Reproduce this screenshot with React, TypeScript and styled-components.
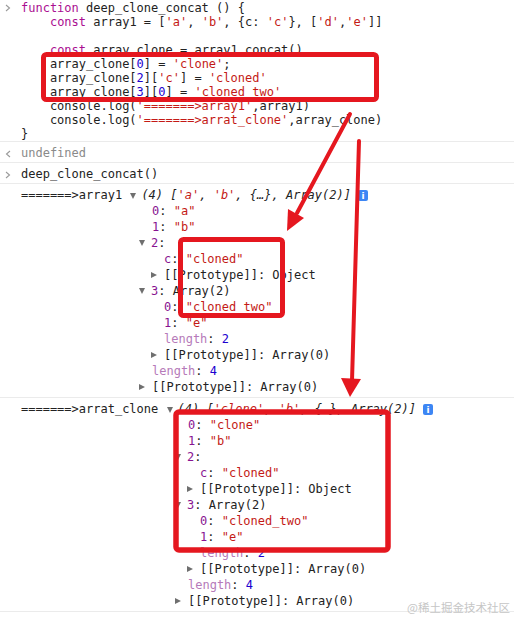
import React from 'react';
import styled, { createGlobalStyle } from 'styled-components';

const Global = createGlobalStyle`
  html, body { margin: 0; padding: 0; background: #fff; }
  body { width: 514px; height: 617px; overflow: hidden; }
`;

const Page = styled.div`
  position: relative;
  width: 514px;
  height: 617px;
  overflow: hidden;
  background: #fff;
  font-family: "DejaVu Sans Mono", "Liberation Mono", monospace;
  font-size: 12px;
  color: #222;
`;

const Message = styled.div<{ $pt?: number; $pb?: number }>`
  display: flex;
  padding: ${(p) => p.$pt ?? 4}px 0 ${(p) => p.$pb ?? 1}px;
  border-bottom: 1px solid #ebebeb;
`;

const Gutter = styled.div<{ $lh: number }>`
  width: 21px;
  flex: none;
  height: ${(p) => p.$lh}px;
  display: flex;
  align-items: center;
  padding-left: 5px;
  box-sizing: border-box;
`;

const Body = styled.div`
  flex: 1;
  min-width: 0;
`;

const Code = styled.div`
  line-height: 14px;
  white-space: pre;
`;

const Line = styled.div`
  height: 14px;
`;

const Kw = styled.span`
  color: #aa0d91;
`;
const Str = styled.span`
  color: #c41a16;
`;
const Num = styled.span`
  color: #1c00cf;
`;

const Plain = styled.div<{ $muted?: boolean }>`
  line-height: 15px;
  height: 15px;
  white-space: pre;
  color: ${(p) => (p.$muted ? '#8a8a8a' : '#222')};
`;

const Header = styled.div`
  display: flex;
  align-items: center;
  height: 15px;
  line-height: 15px;
  white-space: pre;
`;

const Preview = styled.span`
  font-style: italic;
`;

const Info = styled.span`
  display: inline-flex;
  align-items: center;
  justify-content: center;
  width: 10px;
  height: 11px;
  margin-left: 7px;
  border-radius: 2px;
  background: #3d86f4;
  color: #fff;
  font: bold 9px "DejaVu Sans", sans-serif;
  font-style: normal;
`;

const Tree = styled.div<{ $indent: number }>`
  padding-left: ${(p) => p.$indent}px;
`;

const TreeRow = styled.div<{ $depth: number }>`
  display: flex;
  align-items: center;
  height: 16px;
  line-height: 16px;
  white-space: pre;
  padding-left: ${(p) => p.$depth * 12}px;
`;

const Toggle = styled.span<{ $open?: boolean; $inline?: boolean }>`
  display: inline-block;
  width: 0;
  height: 0;
  flex: none;
  margin-left: ${(p) => (p.$inline ? '1px' : '-13.5px')};
  margin-right: ${(p) => (p.$inline ? '5px' : p.$open ? '6.5px' : '7.5px')};
  ${(p) =>
    p.$open
      ? `border-left: 3.5px solid transparent; border-right: 3.5px solid transparent; border-top: 6px solid #6f6f6f;`
      : `border-top: 3.5px solid transparent; border-bottom: 3.5px solid transparent; border-left: 6px solid #6f6f6f;`}
`;

const Key = styled.span<{ $faded?: boolean }>`
  color: ${(p) => (p.$faded ? '#b67ab9' : '#881391')};
`;

const Watermark = styled.div`
  position: absolute;
  right: 4px;
  top: 599px;
  font-family: "Noto Sans CJK SC", "Noto Sans", sans-serif;
  font-size: 11.5px;
  line-height: 16px;
  color: #c6c6c6;
  white-space: nowrap;
`;

const Overlay = styled.svg`
  position: absolute;
  left: 0;
  top: 0;
  pointer-events: none;
`;

const Chevron = ({ dir }: { dir: 'in' | 'out' }) => (
  <svg width="6" height="8" viewBox="0 0 6 8">
    <polyline
      points={dir === 'in' ? '1,1 4.5,4 1,7' : '5,1 1.5,4 5,7'}
      fill="none"
      stroke="#9a9a9a"
      strokeWidth="1.1"
    />
  </svg>
);

type Tok = [string, string];
const codeLines: Tok[][] = [
  [['k', 'function'], ['p', ' deep_clone_concat () {']],
  [
    ['p', '    '],
    ['k', 'const'],
    ['p', ' array1 = ['],
    ['s', "'a'"],
    ['p', ', '],
    ['s', "'b'"],
    ['p', ', {c: '],
    ['s', "'c'"],
    ['p', '}, ['],
    ['s', "'d'"],
    ['p', ','],
    ['s', "'e'"],
    ['p', ']]'],
  ],
  [],
  [['p', '    '], ['k', 'const'], ['p', ' array_clone = array1.concat()']],
  [['p', '    array_clone['], ['n', '0'], ['p', '] = '], ['s', "'clone'"], ['p', ';']],
  [['p', '    array_clone['], ['n', '2'], ['p', ']['], ['s', "'c'"], ['p', '] = '], ['s', "'cloned'"]],
  [['p', '    array_clone['], ['n', '3'], ['p', ']['], ['n', '0'], ['p', '] = '], ['s', "'cloned_two'"]],
  [['p', '    console.log('], ['s', "'=======>array1'"], ['p', ',array1)']],
  [['p', '    console.log('], ['s', "'=======>arrat_clone'"], ['p', ',array_clone)']],
  [['p', '}']],
];

const renderTok = ([t, s]: Tok, i: number) => {
  if (t === 'k') return <Kw key={i}>{s}</Kw>;
  if (t === 's') return <Str key={i}>{s}</Str>;
  if (t === 'n') return <Num key={i}>{s}</Num>;
  return <React.Fragment key={i}>{s}</React.Fragment>;
};

type Node = {
  depth: number;
  toggle?: 'open' | 'closed';
  content: React.ReactNode;
};

const buildTree = (first: string): Node[] => [
  { depth: 0, content: <><Key>0</Key>: <Str>"{first}"</Str></> },
  { depth: 0, content: <><Key>1</Key>: <Str>"b"</Str></> },
  { depth: 0, toggle: 'open', content: <><Key>2</Key>:</> },
  { depth: 1, content: <><Key>c</Key>: <Str>"cloned"</Str></> },
  { depth: 1, toggle: 'closed', content: <>[[Prototype]]: Object</> },
  { depth: 0, toggle: 'open', content: <><Key>3</Key>: Array(2)</> },
  { depth: 1, content: <><Key>0</Key>: <Str>"cloned_two"</Str></> },
  { depth: 1, content: <><Key>1</Key>: <Str>"e"</Str></> },
  { depth: 1, content: <><Key $faded>length</Key>: <Num>2</Num></> },
  { depth: 1, toggle: 'closed', content: <>[[Prototype]]: Array(0)</> },
  { depth: 0, content: <><Key $faded>length</Key>: <Num>4</Num></> },
  { depth: 0, toggle: 'closed', content: <>[[Prototype]]: Array(0)</> },
];

const LogEntry = ({ label, first, indent }: { label: string; first: string; indent: number }) => (
  <Message $pt={4} $pb={2}>
    <Gutter $lh={15} />
    <Body>
      <Header>
        {label + ' '}
        <Toggle $open $inline />
        <Preview>
          (4) [<Str>'{first}'</Str>, <Str>'b'</Str>, {'{…}'}, Array(2)]
        </Preview>
        <Info>i</Info>
      </Header>
      <Tree $indent={indent}>
        {buildTree(first).map((n, i) => (
          <TreeRow key={i} $depth={n.depth}>
            {n.toggle && <Toggle $open={n.toggle === 'open'} />}
            {n.content}
          </TreeRow>
        ))}
      </Tree>
    </Body>
  </Message>
);

const RED = '#e5171f';

export default function App() {
  return (
    <Page>
      <Global />
      <Message $pt={1} $pb={0}>
        <Gutter $lh={14}>
          <Chevron dir="in" />
        </Gutter>
        <Code>
          {codeLines.map((l, i) => (
            <Line key={i}>{l.map(renderTok)}</Line>
          ))}
        </Code>
      </Message>
      <Message>
        <Gutter $lh={15}>
          <Chevron dir="out" />
        </Gutter>
        <Plain $muted>undefined</Plain>
      </Message>
      <Message>
        <Gutter $lh={15}>
          <Chevron dir="in" />
        </Gutter>
        <Plain>deep_clone_concat()</Plain>
      </Message>
      <LogEntry label="=======>array1" first="a" indent={131} />
      <LogEntry label="=======>arrat_clone" first="clone" indent={167} />
      <Message>
        <Gutter $lh={15}>
          <Chevron dir="out" />
        </Gutter>
        <Plain $muted>undefined</Plain>
      </Message>

      <Overlay width="514" height="617" viewBox="0 0 514 617">
        <rect x="43.5" y="54.5" width="333" height="45" rx="3" fill="none" stroke={RED} strokeWidth="5" />
        <rect x="180.5" y="239.5" width="102" height="76" rx="3" fill="none" stroke={RED} strokeWidth="5" />
        <rect x="176" y="412" width="212" height="138" rx="3" fill="none" stroke={RED} strokeWidth="5.5" />
        <line x1="350" y1="114" x2="297" y2="213" stroke={RED} strokeWidth="4" strokeLinecap="round" />
        <polygon points="287,231 288,209 304,218" fill={RED} />
        <line x1="359" y1="141" x2="352" y2="381" stroke={RED} strokeWidth="4" strokeLinecap="round" />
        <polygon points="350,397 341,378 361,379" fill={RED} />
      </Overlay>
      <Watermark>@稀土掘金技术社区</Watermark>
    </Page>
  );
}
